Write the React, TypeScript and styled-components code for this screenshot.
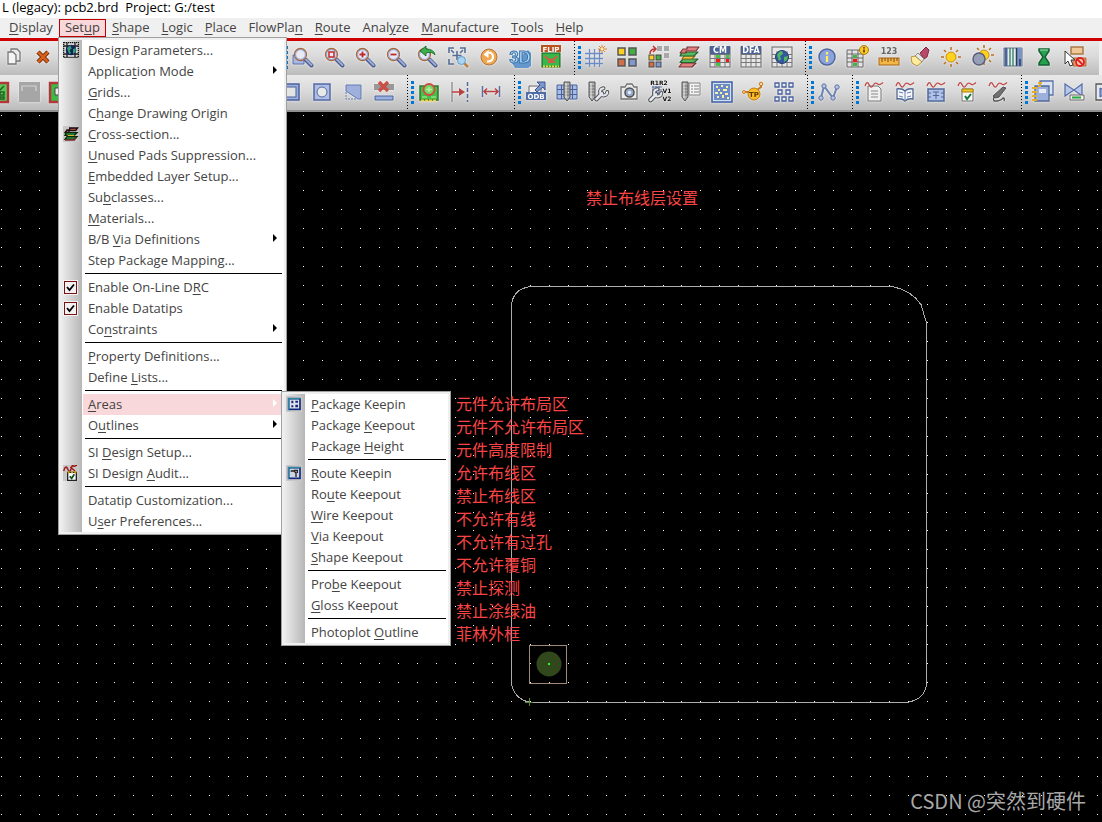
import React from "react";
import styled, { createGlobalStyle, css } from "styled-components";

const GlobalStyle = createGlobalStyle`
  * { box-sizing: border-box; }
  html, body { margin: 0; height: 100%; }
  #root { height: 100%; }
  body {
    font-family: "Open Sans", "Noto Sans", "Noto Sans CJK SC", sans-serif;
    font-size: 13px;
    background: #000;
    overflow: hidden;
  }
`;

/* ---------- shell ---------- */

const Shell = styled.div`
  min-height: 100%;
  display: flex;
  flex-direction: column;
  overflow: hidden;
`;

const TitleBar = styled.header`
  height: 18px;
  padding-left: 2px;
  background: #fff;
  color: #000;
  line-height: 14px;
  white-space: pre;
`;

const MenuBar = styled.nav`
  display: flex;
  align-items: center;
  height: 20px;
  padding-left: 3px;
  background: #f0f0f0;
`;

const MenuSlot = styled.div`
  position: relative;
`;

const MenuTitle = styled.button<{ $open?: boolean }>`
  display: block;
  height: 18px;
  padding: 0 5px 1px;
  border: 1px solid ${(p) => (p.$open ? "#c00000" : "transparent")};
  background: ${(p) => (p.$open ? "#f8d8da" : "transparent")};
  color: #444;
  font: inherit;
  line-height: 15px;
  white-space: nowrap;
`;

const Mnemonic = styled.span`
  text-decoration: underline;
  text-underline-offset: 2px;
  text-decoration-thickness: 1px;
`;

/* ---------- popup menus ---------- */

const Popup = styled.div<{ $sub?: boolean }>`
  position: absolute;
  z-index: 5;
  padding: 2px 2px 2px 1px;
  border: 1px solid #a0a0a0;
  background: #f0f0f0;
  ${(p) =>
    p.$sub
      ? css`
          left: 221px;
          top: -3px;
          width: 170px;
        `
      : css`
          left: -1px;
          top: 18px;
          width: 229px;
        `}
`;

const ItemList = styled.ul`
  margin: 0;
  padding: 0;
  list-style: none;
  background: linear-gradient(to right, #f0f0f0, #b6b6b6) 0 0 / 22px 100% no-repeat #fff;
`;

const ItemRow = styled.li`
  position: relative;
  display: grid;
  grid-template-columns: 23px 1fr;
  align-items: center;
  height: 21px;
`;

const itemFace = css<{ $active?: boolean }>`
  display: flex;
  align-items: center;
  justify-content: space-between;
  height: 21px;
  padding: 0 7px 2px 5px;
  border: 0;
  background: ${(p) => (p.$active ? "#f8d8da" : "transparent")};
  color: #444;
  font: inherit;
  text-align: left;
  white-space: nowrap;
`;

const ItemButton = styled.button<{ $active?: boolean }>`
  ${itemFace}
`;

const ItemLabel = styled.label<{ $active?: boolean }>`
  ${itemFace}
`;

const Gutter = styled.span`
  display: flex;
  justify-content: center;
  align-items: center;
  padding: 0 1px 1px 0;
`;

const Tick = styled.input`
  appearance: none;
  display: block;
  width: 15px;
  height: 15px;
  margin: 0;
  border: 1px solid #f4f4f4;
  outline: 1px solid #7a1010;
  outline-offset: -2px;
  background: #f2f2f2
    url("data:image/svg+xml,%3Csvg xmlns='http://www.w3.org/2000/svg' viewBox='0 0 13 13'%3E%3Cpath d='M3 6l2.500 3 4.500-5.500' fill='none' stroke='%23000' stroke-width='1.800'/%3E%3C/svg%3E")
    center / 13px 13px no-repeat;
`;

const Rule = styled.li`
  height: 1px;
  margin: 2px 2px 3px 25px;
  background: #000;
`;

const Arrow = styled.span<{ $light?: boolean }>`
  width: 0;
  height: 0;
  margin-bottom: 2px;
  border: 4px solid transparent;
  border-right-width: 0;
  border-left-color: ${(p) => (p.$light ? "#fff" : "#000")};
`;

/* ---------- toolbars ---------- */

const ToolArea = styled.div`
  border-top: 3px solid #d00000;
  border-bottom: 2px solid #909090;
  background: #f0f0f0;
  overflow: hidden;
`;

const ToolRow = styled.div<{ $shift: number; $fit?: boolean }>`
  display: flex;
  height: ${(p) => (p.$fit ? 34 : 35)}px;
  width: ${(p) => (p.$fit ? "max-content" : "auto")};
  padding-right: ${(p) => (p.$fit ? 8 : 0)}px;
  margin-left: -${(p) => p.$shift}px;
  background: linear-gradient(#e9e9e9, #dadada 45%, #bcbcbc);
`;

const ToolGroup = styled.div<{ $width?: number }>`
  display: flex;
  flex: none;
  ${(p) => p.$width && `width: ${p.$width}px;`}
`;

const ToolButton = styled.button`
  flex: none;
  width: 31px;
  padding: 0 2px 2px 0;
  border: 0;
  background: transparent;
  display: flex;
  align-items: center;
  justify-content: center;
  svg {
    filter: drop-shadow(0 0 1px #f4f4f4);
  }
`;

const Divider = styled.span`
  flex: none;
  display: flex;
  gap: 3px;
  width: 14px;
  padding-left: 7px;
  &::before {
    content: "";
    width: 1px;
    background: repeating-linear-gradient(#000 0 1px, transparent 1px 3px);
  }
  &::after {
    content: "";
    width: 3px;
    height: 24px;
    align-self: center;
    background: repeating-linear-gradient(#0078d7 0 3px, transparent 3px 5px);
  }
`;

/* ---------- workspace ---------- */

const Workspace = styled.main`
  position: relative;
  flex: 1;
  background: #000;
  overflow: hidden;
`;

const Board = styled.svg`
  position: absolute;
  inset: 0;
  width: 100%;
  height: 100%;
`;

const note = css`
  position: absolute;
  margin: 0;
  color: #f84444;
  font-family: "Noto Sans CJK SC", sans-serif;
  font-size: 16px;
  line-height: 23px;
  white-space: nowrap;
`;

const Caption = styled.p`
  ${note}
  left: 586px;
  top: 74px;
`;

const Notes = styled.ul`
  ${note}
  left: 456px;
  top: 280px;
  padding: 0;
  list-style: none;
`;

const Watermark = styled.p`
  position: absolute;
  right: 16px;
  bottom: 6px;
  margin: 0;
  color: #a8a8a8;
  font-family: "Noto Sans CJK SC", sans-serif;
  font-size: 20px;
  line-height: 30px;
`;

/* ---------- icons ---------- */

const Svg = ({ children, size = 24 }: { children: React.ReactNode; size?: number }) => (
  <svg width={size} height={size} viewBox="0 0 24 24" fill="none" aria-hidden="true">
    {children}
  </svg>
);

const Txt = ({ x, y, s, c, children }: { x: number; y: number; s: number; c: string; children: string }) => (
  <text x={x} y={y} fontSize={s} fill={c} textAnchor="middle" fontWeight="700" fontFamily="DejaVu Sans, sans-serif">
    {children}
  </text>
);

const Lens = ({ children, back }: { children?: React.ReactNode; back?: React.ReactNode }) => (
  <Svg>
    {back}
    <path d="M14.500 14.500l6 6" stroke="#4c5c8c" strokeWidth="4" strokeLinecap="round" />
    <path d="M15 14.500l5.500 5.500" stroke="#9cacd8" strokeWidth="2" strokeLinecap="round" />
    <circle cx="9.500" cy="9.500" r="6" fill="#e8eaf6" stroke="#a8683c" strokeWidth="1.300" />
    <circle cx="9.500" cy="9.500" r="4.900" stroke="#8898c8" />
    {children}
  </Svg>
);

const Wave = () => <path d="M3 6q2-6 4-1.500t4 1 4-2 3 1q2-1 3-2" stroke="#c04848" strokeWidth="1.300" />;

const Pillar = ({ x = 9 }: { x?: number }) => (
  <g transform={`translate(${x} 2)`}>
    <path d="M0 0h6v15l-3 4-3-4z" fill="#b0b0b0" stroke="#505050" />
    <path d="M0 4h6M0 7h6M0 10h6M0 13h6" stroke="#707070" />
    <path d="M2 1v15" stroke="#f0f0f0" />
  </g>
);

const Cells = ({ head }: { head?: string }) => (
  <g>
    <rect x="2" y="2" width="20" height="20" fill="#e6e6e6" stroke="#666" />
    <path d="M2 9.500h20M2 13.500h20M2 17.500h20M7 6v16M12 6v16M17 6v16" stroke="#777" />
    {head && (
      <>
        <rect x="2" y="1" width="20" height="8" fill="#4a6294" />
        <Txt x={12} y={8} s={8} c="#fff">{head}</Txt>
      </>
    )}
  </g>
);

const Globe = () => (
  <g>
    <circle cx="12" cy="12" r="6.500" fill="#3458a0" stroke="#233c70" />
    <path d="M7 10q2-4 5-4l1 3-3 2 1 3-2 2zM14 12l4-1-1 4-3 2z" fill="#4fb860" />
  </g>
);

const Layers = () => (
  <g strokeWidth="1.200" strokeLinejoin="round">
    <path d="M5 18h14l-4 4H2z" fill="#e08080" stroke="#7a3030" />
    <path d="M6 14h15l-4 3.500H3z" fill="#58b860" stroke="#246430" />
    <path d="M7 11h11l-3 3H5z" fill="#f0c040" stroke="#986c20" />
    <path d="M5 7h16l-4 4H3z" fill="#58b860" stroke="#246430" />
    <path d="M10 2h12l-3 4H9v2H3l3-4h4z" fill="#e08080" stroke="#7a3030" />
  </g>
);

const Wrench = ({ x = 8, y = 8 }: { x?: number; y?: number }) => (
  <g transform={`translate(${x} ${y})`} strokeLinecap="round">
    <path d="M3.500 13L9 7.500" stroke="#505050" strokeWidth="4.600" />
    <path d="M10.500 2.200a3.600 3.600 0 1 0 3.800 3.800" stroke="#505050" strokeWidth="4" />
    <path d="M10.500 2.200a3.600 3.600 0 1 0 3.800 3.800" stroke="#e4e8f0" strokeWidth="2" />
    <path d="M3.500 13L9 7.500" stroke="#e4e8f0" strokeWidth="2.600" />
  </g>
);

const Sun = ({ x = 12, y = 12, r = 5 }: { x?: number; y?: number; r?: number }) => (
  <g transform={`translate(${x} ${y})`}>
    <path
      d="M0-10v3M0 7v3M-10 0h3M7 0h3M-7-7l2 2M5 5l2 2M-7 7l2-2M5-5l2-2"
      stroke="#b87020"
      strokeWidth="1.500"
    />
    <circle r={r} fill="#ffd21c" stroke="#c88a18" />
  </g>
);

const icons: Record<string, React.ReactNode> = {
  Copy: (
    <Svg>
      <path d="M10 4h6l3 3v9h-9z" fill="#ececec" stroke="#777" strokeWidth="1.300" />
      <path d="M7 7h5l3 3v9H7z" fill="#f4f4f4" stroke="#777" strokeWidth="1.300" />
    </Svg>
  ),
  Delete: (
    <Svg>
      <path d="M6 7l10 10M16 7L6 17" stroke="#6a2808" strokeWidth="4.500" />
      <path d="M6 7l10 10M16 7L6 17" stroke="#d86018" strokeWidth="2.500" />
    </Svg>
  ),
  "Zoom points": <Lens back={<path d="M2 10h11v9H2z" fill="#a8b8e4" stroke="#5870a8" />} />,
  "Zoom window": <Lens><rect x="7" y="7" width="5" height="5" stroke="#c02828" strokeWidth="1.500" /></Lens>,
  "Zoom in": <Lens><path d="M6.500 9.500h6M9.500 6.500v6" stroke="#c02828" strokeWidth="1.800" /></Lens>,
  "Zoom out": <Lens><path d="M6.500 9.500h6" stroke="#c02828" strokeWidth="1.800" /></Lens>,
  "Zoom previous": (
    <Lens><path d="M20 10q-1-6-9-6V1L5 6l6 5V8q6-2 9 2z" fill="#3cb04c" stroke="#1c7030" /></Lens>
  ),
  "Zoom fit": (
    <Svg>
      <path d="M3 8V3h5M14 3h5v5M3 14v5h5M11 6v9M6.500 10.500h9M5 5l3 3M17 5l-3 3" stroke="#566c94" strokeWidth="1.600" />
      <path d="M18 18l4 4" stroke="#c08040" strokeWidth="2.500" />
      <circle cx="15.500" cy="15.500" r="4" fill="#a8d4f0" stroke="#5898c8" />
    </Svg>
  ),
  Redraw: (
    <Svg>
      <circle cx="12" cy="12" r="8" fill="#f0a850" stroke="#b0743c" />
      <path d="M10 16.500q6 0 6-4.500t-5-4.500" stroke="#fff" strokeWidth="2.200" />
      <path d="M6.500 9.500l5-4.500v8z" fill="#fff" />
    </Svg>
  ),
  "3D view": (
    <Svg>
      <path d="M4 18l16-13 3 3v13l-3 2H7z" fill="#6498cc" />
      <text x="12" y="18" fontSize="17" textAnchor="middle" fontFamily="Liberation Sans, sans-serif" fontWeight="700" fill="#b4d8f4" stroke="#3a74ac">3D</text>
    </Svg>
  ),
  Flip: (
    <Svg>
      <rect x="3" y="8" width="18" height="14" fill="#38b848" stroke="#145c1c" />
      <path d="M6 11q6 8 12 0M9 17h7" stroke="#d8584a" strokeWidth="2" />
      <path d="M4 21.500h16" stroke="#f0d040" strokeWidth="2" strokeDasharray="2 1" />
      <rect x="2" y="0" width="20" height="7" fill="#b8541c" />
      <Txt x={12} y={6.5} s={7} c="#fff">FLIP</Txt>
    </Svg>
  ),
  Grid: (
    <Svg>
      <path d="M1 8.500h18M1 13.500h18M1 18.500h18M5.500 4v18M10.500 4v18M15.500 4v18" stroke="#6c8cc4" strokeWidth="1.300" />
      <path d="M18 0v8M14 4h9M15 1l6 6M21 1l-6 6" stroke="#d8842c" />
      <path d="M17 3h2v2h-2z" fill="#fff0a0" />
    </Svg>
  ),
  Place: (
    <Svg>
      <g stroke="#555" strokeWidth="1.500">
        <rect x="3" y="3" width="7" height="7" fill="#ffd020" />
        <rect x="14" y="3" width="7" height="7" fill="#40b040" />
        <rect x="3" y="14" width="7" height="7" fill="#d07048" />
        <rect x="14" y="14" width="7" height="7" fill="#8098d0" />
      </g>
    </Svg>
  ),
  Swap: (
    <Svg>
      <path d="M11 1h5v5h-5zM18 1h5v5h-5zM18 8h5v5h-5z" fill="#a8a8a8" />
      <path d="M4 9q0-5 5-5M7 1l3 3-3 3" stroke="#c03434" strokeWidth="1.500" />
      <g stroke="#444">
        <rect x="3" y="10" width="5" height="5" fill="#ffd020" />
        <rect x="10" y="10" width="5" height="5" fill="#40b040" />
        <rect x="3" y="17" width="5" height="5" fill="#d07048" />
        <rect x="10" y="17" width="5" height="5" fill="#8098d0" />
      </g>
    </Svg>
  ),
  "Cross section": <Svg><Layers /></Svg>,
  "Constraint manager": (
    <Svg>
      <Cells head="CM" />
      <path d="M8 10h4v3H8zM8 18h4v3H8zM18 10h3v3h-3z" fill="#48c048" />
      <path d="M8 14h4v3H8zM18 14h3v3h-3z" fill="#f01c1c" />
    </Svg>
  ),
  "DFA table": <Svg><Cells head="DFA" /></Svg>,
  "Global table": <Svg><Cells /><Globe /></Svg>,
  Info: (
    <Svg>
      <circle cx="12" cy="12" r="8" fill="#8ba2dc" stroke="#50689c" strokeWidth="1.500" />
      <path d="M12 7v2.500M12 11v6" stroke="#ffef60" strokeWidth="2.200" />
    </Svg>
  ),
  "Table info": (
    <Svg>
      <path d="M1 5h16v17H1z" fill="#e6e6e6" stroke="#666" />
      <path d="M1 9h16M1 13h16M1 17h16M6 5v17M12 5v17" stroke="#666" />
      <path d="M7 10h4v3H7zM7 18h4v3H7z" fill="#48b048" />
      <path d="M7 14h4v3H7z" fill="#f01c1c" />
      <circle cx="18" cy="5" r="4.500" fill="#ffc81c" stroke="#a87810" />
      <path d="M18 2v1.500M18 4.500v3" stroke="#333" strokeWidth="1.500" />
    </Svg>
  ),
  Measure: (
    <Svg>
      <Txt x={12} y={9} s={8} c="#666">123</Txt>
      <rect x="2" y="13" width="20" height="7" fill="#f4b848" stroke="#a86418" />
      <path d="M5 13v4M8 13v3M11 13v4M14 13v3M17 13v4M20 13v3" stroke="#7c4810" />
    </Svg>
  ),
  Highlight: (
    <Svg>
      <path d="M12 8l6-6 3 3-2 7-3 2z" fill="#b84868" stroke="#802840" />
      <path d="M10 8l6 6-2 3-7-6z" fill="#e8e8e8" stroke="#888" />
      <path d="M3 12l4-1 7 6-5 4-5-3z" fill="#ffec9c" stroke="#b09040" />
    </Svg>
  ),
  Brighten: <Svg><Sun /></Svg>,
  Shadow: (
    <Svg>
      <Sun x={14} y={10} r={5} />
      <circle cx="9" cy="14" r="6" fill="#98a0b8" stroke="#586078" strokeWidth="1.500" />
    </Svg>
  ),
  Strips: (
    <Svg>
      <path d="M3 3h18v18H3z" fill="#e8ecf0" stroke="#607090" />
      <path d="M5 3v18" stroke="#4c6494" strokeWidth="3" />
      <path d="M9 3v18M12 3v18" stroke="#2c7c5c" strokeWidth="1.300" />
      <path d="M15 3h6v18h-6z" fill="#7c94c4" />
      <path d="M15.500 3v18M19 14v7" stroke="#2c3c5c" strokeWidth="1.500" />
    </Svg>
  ),
  Waiver: (
    <Svg>
      <path d="M7 4h10v2l-4 6 4 6v2H7v-2l4-6-4-6z" fill="#28a050" stroke="#146030" strokeWidth="1.500" />
      <path d="M8 5h8" stroke="#a0e8b8" />
    </Svg>
  ),
  "Cancel selection": (
    <Svg>
      <path d="M8 2h12v7H8z" fill="#f0c898" stroke="#a87848" strokeWidth="1.500" />
      <path d="M10 13h13v8H10z" fill="#f09868" stroke="#a86838" />
      <circle cx="17" cy="17" r="4" fill="#f8c8b0" stroke="#e02020" strokeWidth="1.800" />
      <path d="M14 14l6 6" stroke="#e02020" strokeWidth="1.800" />
      <path d="M2 6v13l3-3 2 5 3-1-2-5h4z" fill="#fff" stroke="#333" />
    </Svg>
  ),
  "Design check": (
    <Svg>
      <rect x="2" y="3" width="20" height="19" fill="#58c858" stroke="#b03838" strokeWidth="2.500" />
      <path d="M12 8l2 2 4-4M14 12h4v3h-4zM14 17h4v2h-4z" stroke="#246024" strokeWidth="1.500" />
    </Svg>
  ),
  Inactive: (
    <Svg>
      <rect x="2" y="2" width="21" height="20" fill="#a6a6a6" />
      <path d="M5 11V6h14v5" stroke="#d4d4d4" strokeWidth="1.200" />
    </Svg>
  ),
  "Board window": (
    <Svg>
      <rect x="2" y="3" width="20" height="19" fill="#40b848" stroke="#b03838" strokeWidth="2.500" />
      <path d="M7 8h10v7H7z" fill="#eee" stroke="#444" />
    </Svg>
  ),
  Rectangle: (
    <Svg>
      <rect x="3" y="4" width="17" height="16" fill="#9cb0dc" stroke="#48609c" strokeWidth="1.500" />
      <rect x="6" y="7" width="11" height="10" fill="#e4e4e4" stroke="#48609c" />
    </Svg>
  ),
  Circle: (
    <Svg>
      <rect x="4" y="4" width="16" height="16" fill="#b0bee4" stroke="#5068a4" strokeWidth="1.500" />
      <circle cx="12" cy="12" r="5" fill="#e8e8e8" stroke="#5068a4" />
    </Svg>
  ),
  Cutout: (
    <Svg>
      <path d="M5 5h15v14h-3L5 11z" fill="#a0b0dc" stroke="#6078b0" />
      <path d="M5 12v7h11" stroke="#6078b0" strokeDasharray="2 1" />
    </Svg>
  ),
  "Delete islands": (
    <Svg>
      <path d="M2 4h20v6H2z" fill="#989898" />
      <path d="M7 2l9 9M16 2l-9 9" stroke="#c85048" strokeWidth="3.500" />
      <path d="M3 16h18v4H3z" fill="#9cb0e0" stroke="#48609c" />
    </Svg>
  ),
  "Board circle": (
    <Svg>
      <rect x="3" y="6" width="18" height="14" fill="#48c048" stroke="#2c782c" strokeWidth="1.500" />
      <path d="M5 17h5M14 17h5" stroke="#b8f0a0" />
      <path d="M4 20.500h16" stroke="#f0d040" strokeWidth="2" strokeDasharray="3 1" />
      <circle cx="12" cy="9.500" r="5.500" fill="#70d860" stroke="#d04848" strokeWidth="1.800" />
      <path d="M9 9.500h6M12 7v5" stroke="#b8f0a0" strokeWidth="1.500" />
    </Svg>
  ),
  "Measure to": (
    <Svg>
      <path d="M4 2v20" stroke="#808080" strokeWidth="1.200" />
      <path d="M19.500 2v20" stroke="#5068a0" strokeWidth="1.500" strokeDasharray="4 2" />
      <path d="M4 12h8" stroke="#b84040" strokeWidth="1.500" />
      <path d="M11 8l6 4-6 4z" fill="#b84040" />
    </Svg>
  ),
  "Measure between": (
    <Svg>
      <path d="M3.500 6v11M20.500 6v11" stroke="#5870a8" strokeWidth="1.500" />
      <path d="M5 11.500h14M8 8.500l-3 3 3 3M16 8.500l3 3-3 3" stroke="#b84040" strokeWidth="1.500" />
    </Svg>
  ),
  ODB: (
    <Svg>
      <path d="M5 6h12v8H5z" fill="#f0f0f0" stroke="#666" />
      <path d="M11 10l5-5-3-3h8v8l-2-3-6 5z" fill="#7c98d0" stroke="#3c5488" />
      <path d="M2 12h20v8H2z" fill="#506ca8" />
      <Txt x={12} y={19} s={7} c="#fff">ODB</Txt>
    </Svg>
  ),
  Padstack: (
    <Svg>
      <path d="M2 5h20v14H2z" fill="#a8bce4" stroke="#48609c" />
      <path d="M2 9.500h20M2 14.500h20M6.500 5v14M17.500 5v14" stroke="#48609c" />
      <Pillar />
    </Svg>
  ),
  "Padstack tools": <Svg><Pillar x={3} /><Wrench x={7} y={6} /></Svg>,
  Snapshot: (
    <Svg>
      <path d="M4 7h4l2-3h5l2 3h3v12H4z" fill="#ececec" stroke="#707070" strokeWidth="1.300" />
      <circle cx="12.500" cy="12.500" r="4.500" fill="#98a8c8" stroke="#505050" strokeWidth="1.500" />
      <circle cx="12.500" cy="12.500" r="1.800" fill="#e4ecfc" />
    </Svg>
  ),
  Rename: (
    <Svg>
      <path d="M4 7h10M4 10h10M4 13h10M5 6v9M8 6v9M11 6v9" stroke="#5870a8" />
      <Wrench x={-1} y={7} />
      <Txt x={11} y={5} s={6} c="#111">R1R2</Txt>
      <Txt x={19} y={13} s={6} c="#111">V1</Txt>
      <Txt x={19} y={21} s={6} c="#111">V2</Txt>
    </Svg>
  ),
  "Drill legend": (
    <Svg>
      <path d="M10 3h11v12H10z" fill="#f4f4f4" stroke="#808080" />
      <path d="M12 6h2M15 6h5M12 9h2M15 9h5M12 12h2M15 12h5" stroke="#808080" />
      <Pillar x={3} />
    </Svg>
  ),
  Pattern: (
    <Svg>
      <rect x="2" y="2" width="20" height="20" fill="#d4e0f4" stroke="#3c5ca0" strokeWidth="1.500" />
      <rect x="4" y="4" width="16" height="16" fill="#6c8cc8" />
      <path
        d="M6 6h2v2H6zM11 5h2v2h-2zM16 6h2v2h-2zM8 9h2v2H8zM13 9h4v2h-4zM5 12h3v2H5zM10 12h2v2h-2zM15 13h3v2h-3zM7 16h2v2H7zM12 15h2v3h-2zM17 17h2v2h-2z"
        fill="#fff0a8"
      />
    </Svg>
  ),
  "Test point": (
    <Svg>
      <path d="M3 12h7M16 10l4-3V4" stroke="#c87820" strokeWidth="2" />
      <circle cx="20" cy="4" r="1.800" fill="#f8d890" stroke="#c87820" />
      <circle cx="3" cy="12" r="1.500" fill="#f8d890" stroke="#c87820" />
      <circle cx="13" cy="14" r="6" fill="#ffbc24" stroke="#b87810" />
      <Txt x={13} y={16.5} s={7} c="#5c3c08">TP</Txt>
    </Svg>
  ),
  Array: (
    <Svg>
      <path
        d="M3 3h4v4H3zM10 3h4v4h-4zM17 3h4v4h-4zM6 10h4v4H6zM14 10h4v4h-4zM3 17h4v4H3zM10 17h4v4h-4zM17 17h4v4h-4z"
        fill="#e8eefc"
        stroke="#48609c"
        strokeWidth="1.300"
      />
    </Svg>
  ),
  Net: (
    <Svg>
      <path d="M4 18L7 6l9 12 4-11" stroke="#6c84b4" strokeWidth="2" />
      <g fill="#b8c4e0" stroke="#5870a4">
        <circle cx="4" cy="18" r="2.200" /><circle cx="7" cy="6" r="2.200" />
        <circle cx="16" cy="18" r="2.200" /><circle cx="20" cy="7" r="2.200" />
      </g>
    </Svg>
  ),
  "Signal report": (
    <Svg>
      <path d="M6 6h10l3 3v12H6z" fill="#f0f0f0" stroke="#777" />
      <path d="M9 11h7M9 14h7M9 17h7" stroke="#888" />
      <Wave />
    </Svg>
  ),
  "Signal library": (
    <Svg>
      <path d="M4 9q5-1 8 2 3-3 8-2v10q-5-1-8 2-3-3-8-2z" fill="#f4f6fc" stroke="#506890" strokeWidth="1.300" />
      <path d="M12 11v10M6 12l4 1M6 16l4 1M14 13l4-1M14 17l4-1" stroke="#6880b0" />
      <Wave />
    </Svg>
  ),
  "Signal model": (
    <Svg>
      <path d="M4 9h16v12H4z" fill="#b0c0e8" stroke="#506898" strokeWidth="1.500" />
      <path d="M4 13h3M17 13h3M4 17h3M17 17h3M9 12h6M12 12v7M9 15.500h6" stroke="#506898" />
      <Wave />
    </Svg>
  ),
  "Signal audit": (
    <Svg>
      <path d="M7 9h11v12H7z" fill="#f8f8f8" stroke="#707070" />
      <path d="M7 9h11v3H7z" fill="#f0c828" stroke="#a88010" />
      <path d="M10 16l2 3 4-5" stroke="#187838" strokeWidth="2" />
      <Wave />
    </Svg>
  ),
  "Signal probe": (
    <Svg>
      <path d="M7 16l10-9 3 1-7 9-4 1z" fill="#707070" stroke="#505050" />
      <path d="M8 17q-2 5 3 4t6-3q2 0 1 3" stroke="#505050" strokeWidth="1.300" />
      <Wave />
    </Svg>
  ),
  Books: (
    <Svg>
      <path d="M9 1h13v14H9z" fill="#dce4f4" stroke="#5870a8" strokeWidth="1.300" />
      <path d="M4 6h14v15H4z" fill="#9cb0dc" stroke="#506898" strokeWidth="1.300" />
      <path d="M8 9h7v4H8z" fill="#e8ecf8" />
      <path d="M1 8h5M1 12h5M1 16h5M1 20h5M7 3h4M7 6h3" stroke="#e8b020" strokeWidth="1.800" />
    </Svg>
  ),
  Mirror: (
    <Svg>
      <path d="M3 4l9 6 8-6v12l-8-6-9 6z" fill="#b8c8ec" stroke="#5870a8" strokeWidth="1.300" />
      <path d="M8 15h14v5H8z" fill="#f0f0f0" stroke="#666" />
      <path d="M10 17.500h9" stroke="#28a838" strokeWidth="2" />
    </Svg>
  ),
  Sheet: (
    <Svg>
      <path d="M3 4h18v16H3z" fill="#e4e8f0" stroke="#555" strokeWidth="1.300" />
      <path d="M7 8l8 4-8 5z" fill="#8ca4d8" stroke="#405890" />
    </Svg>
  ),
};

/* Small, darker glyphs shown in the menu gutter. */
const GutterTile = styled.span`
  display: flex;
  width: 16px;
  height: 16px;
  background: #c8c8c8;
`;

const gutterIcons: Record<string, React.ReactNode> = {
  params: (
    <Svg size={16}>
      <rect x="1" y="1" width="22" height="22" fill="#ddd" stroke="#111" strokeWidth="2" strokeDasharray="2 1" />
      <path d="M1 6h22M1 18h22M6 1v22M18 1v22" stroke="#222" strokeWidth="2" />
      <circle cx="12" cy="12" r="8" fill="#14205c" />
      <path d="M6 9l5-4 2 5-3 2 2 5-3 1zM15 11l4-2v6l-4 3z" fill="#2fa070" />
    </Svg>
  ),
  section: (
    <Svg size={16}>
      <path d="M10 3h12l-3 4H9v3H3l3-4h4z" fill="#a05050" stroke="#200808" strokeWidth="2" />
      <path d="M5 10h16l-4 4H3z" fill="#289040" stroke="#082808" strokeWidth="2" />
      <path d="M7 14.500h10" stroke="#e0b030" strokeWidth="2" />
      <path d="M6 16h15l-4 4H3z" fill="#289040" stroke="#082808" strokeWidth="2" />
      <path d="M3 21h14l3-4" stroke="#803030" strokeWidth="2" />
    </Svg>
  ),
  audit: (
    <Svg size={16}>
      <path d="M1 9q3-10 6-3t5 0 3-5 6-1M11 3l7 6" stroke="#a01818" strokeWidth="2.200" />
      <path d="M7 11h13v12H7z" fill="#fff" stroke="#222" strokeWidth="2" />
      <path d="M7 11h13" stroke="#c8a010" strokeWidth="3" strokeDasharray="3 2" />
      <path d="M10 17l3 3 4-6" stroke="#105020" strokeWidth="2.500" />
    </Svg>
  ),
  keepinPackage: (
    <Svg size={16}>
      <rect x="4" y="4" width="17" height="16" fill="#e0e4f0" stroke="#102880" strokeWidth="2.500" />
      <path d="M4 21V4h18" stroke="#2888a0" strokeWidth="2" />
      <path d="M8 7h3v4H8zM14 7h4v3h-4zM8 14h3v3H8zM14 13h4v4h-4z" fill="#182870" />
    </Svg>
  ),
  keepinRoute: (
    <Svg size={16}>
      <rect x="4" y="4" width="17" height="16" fill="#d0d4e0" stroke="#102880" strokeWidth="2.500" />
      <path d="M4 21V4h18" stroke="#2888a0" strokeWidth="2" />
      <path d="M7 9h5l3 3v6M12 8h5v4" stroke="#222" strokeWidth="2" />
    </Svg>
  ),
};

/* ---------- data ---------- */

type Item = { label: string; icon?: string; checked?: boolean; arrow?: boolean; sub?: Entry[] };
type Entry = Item | null;

const areas: Entry[] = [
  { label: "&Package Keepin", icon: "keepinPackage" },
  { label: "Package &Keepout" },
  { label: "Package &Height" },
  null,
  { label: "&Route Keepin", icon: "keepinRoute" },
  { label: "Ro&ute Keepout" },
  { label: "&Wire Keepout" },
  { label: "&Via Keepout" },
  { label: "&Shape Keepout" },
  null,
  { label: "Pro&be Keepout" },
  { label: "&Gloss Keepout" },
  null,
  { label: "Photoplot &Outline" },
];

const setup: Entry[] = [
  { label: "Desi&gn Parameters...", icon: "params" },
  { label: "Applica&tion Mode", arrow: true },
  { label: "&Grids..." },
  { label: "C&hange Drawing Origin" },
  { label: "&Cross-section...", icon: "section" },
  { label: "&Unused Pads Suppression..." },
  { label: "&Embedded Layer Setup..." },
  { label: "Su&bclasses..." },
  { label: "&Materials..." },
  { label: "B/B &Via Definitions", arrow: true },
  { label: "Step Package Mapping..." },
  null,
  { label: "Enable On-Line D&RC", checked: true },
  { label: "Enable Datatips", checked: true },
  { label: "Co&nstraints", arrow: true },
  null,
  { label: "&Property Definitions..." },
  { label: "Define &Lists..." },
  null,
  { label: "&Areas", arrow: true, sub: areas },
  { label: "O&utlines", arrow: true },
  null,
  { label: "SI &Design Setup..." },
  { label: "SI Design &Audit...", icon: "audit" },
  null,
  { label: "Datatip Customization..." },
  { label: "U&ser Preferences..." },
];

const menus = [
  "&Display", "Set&up", "&Shape", "&Logic", "&Place", "FlowPla&n",
  "&Route", "Anal&yze", "&Manufacture", "&Tools", "&Help",
];

const topGroups = [
  ["Copy", "Delete"],
  ["Zoom points", "Zoom window", "Zoom in", "Zoom out", "Zoom previous", "Zoom fit", "Redraw", "3D view", "Flip"],
  ["Grid", "Place", "Swap", "Cross section", "Constraint manager", "DFA table", "Global table"],
  ["Info", "Table info", "Measure", "Highlight", "Brighten", "Shadow", "Strips", "Waiver", "Cancel selection"],
];

const bottomGroups = [
  ["Design check", "Inactive", "Board window"],
  ["Rectangle", "Circle", "Cutout", "Delete islands"],
  ["Board circle", "Measure to", "Measure between"],
  ["ODB", "Padstack", "Padstack tools", "Snapshot", "Rename", "Drill legend", "Pattern", "Test point", "Array"],
  ["Net"],
  ["Signal report", "Signal library", "Signal model", "Signal audit", "Signal probe"],
  ["Books", "Mirror", "Sheet"],
];

const notes = [
  "元件允许布局区", "元件不允许布局区", "元件高度限制", "允许布线区", "禁止布线区", "不允许有线",
  "不允许有过孔", "不允许覆铜", "禁止探测", "禁止涂绿油", "菲林外框",
];

/* ---------- parts ---------- */

const Label = ({ text }: { text: string }) => {
  const at = text.indexOf("&");
  if (at < 0) return <span>{text}</span>;
  return (
    <span>
      {text.slice(0, at)}
      <Mnemonic>{text[at + 1]}</Mnemonic>
      {text.slice(at + 2)}
    </span>
  );
};

const Menu = ({ entries, sub }: { entries: Entry[]; sub?: boolean }) => (
  <Popup $sub={sub}>
    <ItemList>
      {entries.map((e, i) => {
        if (!e) return <Rule key={i} role="separator" />;
        if (e.checked) {
          const id = `toggle-${i}`;
          return (
            <ItemRow key={i}>
              <Gutter><Tick type="checkbox" id={id} defaultChecked /></Gutter>
              <ItemLabel htmlFor={id}><Label text={e.label} /></ItemLabel>
            </ItemRow>
          );
        }
        return (
          <ItemRow key={i}>
            <Gutter>{e.icon && <GutterTile>{gutterIcons[e.icon]}</GutterTile>}</Gutter>
            <ItemButton type="button" $active={!!e.sub}>
              <Label text={e.label} />
              {e.arrow && <Arrow $light={!!e.sub} />}
            </ItemButton>
            {e.sub && <Menu entries={e.sub} sub />}
          </ItemRow>
        );
      })}
    </ItemList>
  </Popup>
);

const Tools = ({ groups, shift, lead, fit }: { groups: string[][]; shift: number; lead: number; fit?: boolean }) => (
  <ToolRow $shift={shift} $fit={fit}>
    {groups.map((g, i) => (
      <React.Fragment key={i}>
        {i > 0 && <Divider />}
        <ToolGroup $width={i === 0 ? lead : undefined}>
          {g.map((name) => (
            <ToolButton key={name} type="button" aria-label={name}>{icons[name]}</ToolButton>
          ))}
        </ToolGroup>
      </React.Fragment>
    ))}
  </ToolRow>
);

const GRID = 18.9;
const dots = (() => {
  let d = "";
  for (let r = 0; r < 80; r++)
    for (let c = 0; c < 140; c++)
      d += `M${Math.floor(1.5 + c * GRID)} ${Math.floor(3.1 + r * GRID)}h1v1h-1z`;
  return d;
})();

export default function App() {
  return (
    <Shell>
      <GlobalStyle />
      <TitleBar>L (legacy): pcb2.brd  Project: G:/test</TitleBar>
      <MenuBar>
        {menus.map((m) => (
          <MenuSlot key={m}>
            <MenuTitle type="button" $open={m === "Set&up"}><Label text={m} /></MenuTitle>
            {m === "Set&up" && <Menu entries={setup} />}
          </MenuSlot>
        ))}
      </MenuBar>
      <ToolArea>
        <Tools groups={topGroups} shift={2} lead={276} fit />
        <Tools groups={bottomGroups} shift={17} lead={279} />
      </ToolArea>
      <Workspace>
        <Board aria-hidden="true">
          <path d={dots} fill="#fff" shapeRendering="crispEdges" />
          <g fill="none" shapeRendering="crispEdges">
            <path
              d="M530.500 174.500H892Q911 178 921 192.500L926.500 211V571Q926 587 907 590.500H530Q513 586 511.500 571V193Q513 177 530.500 174.500z"
              stroke="#acacac"
            />
            <rect x="529.500" y="533.500" width="37" height="38" stroke="#a08878" />
            <path d="M525 590.500h8M529.500 586v8" stroke="#5c8838" />
          </g>
          <circle cx="549" cy="552" r="12.500" fill="#30481c" />
          <path d="M548 551h2v2h-2z" fill="#20ff20" />
        </Board>
        <Caption>禁止布线层设置</Caption>
        <Notes>{notes.map((n) => <li key={n}>{n}</li>)}</Notes>
        <Watermark>CSDN @突然到硬件</Watermark>
      </Workspace>
    </Shell>
  );
}
